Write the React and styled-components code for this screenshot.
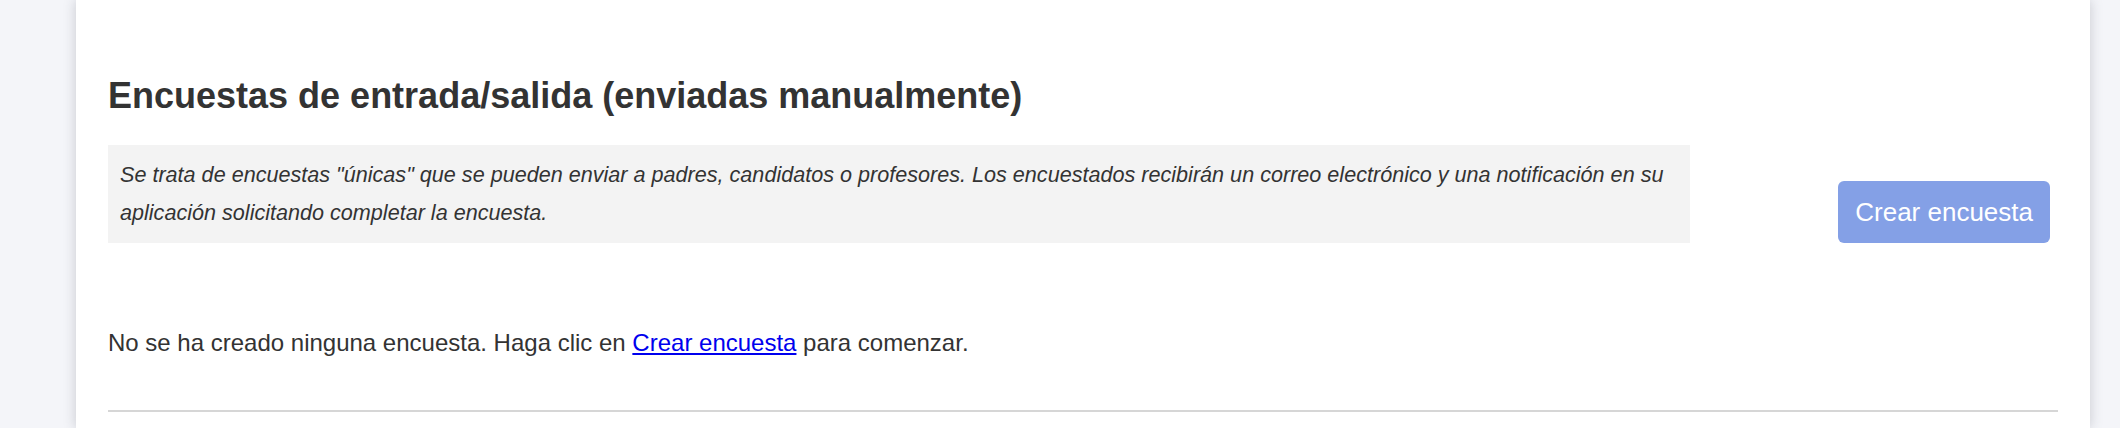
import React from "react";
import styled, { createGlobalStyle } from "styled-components";

const GlobalStyle = createGlobalStyle`
  html, body {
    margin: 0;
    padding: 0;
    background: #f4f5f9;
    font-family: "Liberation Sans", Arial, Helvetica, sans-serif;
    color: #333333;
  }
`;

const Page = styled.div`
  display: flex;
  min-height: 100vh;
  padding-left: 76px;
  box-sizing: border-box;
`;

const Card = styled.section`
  width: 2014px;
  min-height: 100vh;
  background: #ffffff;
  box-shadow: 0 0 12px rgba(40, 44, 60, 0.22);
  padding: 75px 32px 0;
  box-sizing: border-box;
`;

const Title = styled.h2`
  margin: 0;
  font-size: 36px;
  line-height: 42px;
  font-weight: 700;
  color: #333333;
`;

const IntroRow = styled.div`
  display: flex;
  align-items: flex-end;
  margin-top: 28px;
`;

const Note = styled.p`
  margin: 0;
  width: 1582px;
  box-sizing: border-box;
  padding: 11px 12px;
  background: #f3f3f3;
  font-size: 21.6px;
  line-height: 38px;
  font-style: italic;
  color: #333333;
`;

const CreateButton = styled.button`
  margin-left: auto;
  margin-right: 8px;
  height: 62px;
  padding: 0 17px;
  border: none;
  border-radius: 6px;
  background: #84a0e6;
  color: #ffffff;
  font-family: inherit;
  font-size: 26px;
  cursor: pointer;
`;

const Empty = styled.p`
  margin: 82px 0 0;
  font-size: 24px;
  line-height: 36px;
  color: #333333;
`;

const Link = styled.a`
  color: #0000ee;
  text-decoration: underline;
`;

const Divider = styled.hr`
  margin: 49px 0 0;
  border: none;
  border-top: 2px solid #d6d6d6;
`;

const App = () => {
  return (
    <>
      <GlobalStyle />
      <Page>
        <Card>
          <Title>Encuestas de entrada/salida (enviadas manualmente)</Title>
          <IntroRow>
            <Note>
              Se trata de encuestas "únicas" que se pueden enviar a padres,
              candidatos o profesores. Los encuestados recibirán un correo
              electrónico y una notificación en su aplicación solicitando
              completar la encuesta.
            </Note>
            <CreateButton type="button">Crear encuesta</CreateButton>
          </IntroRow>
          <Empty>
            No se ha creado ninguna encuesta. Haga clic en{" "}
            <Link href="#">Crear encuesta</Link> para comenzar.
          </Empty>
          <Divider />
        </Card>
      </Page>
    </>
  );
};

export default App;
